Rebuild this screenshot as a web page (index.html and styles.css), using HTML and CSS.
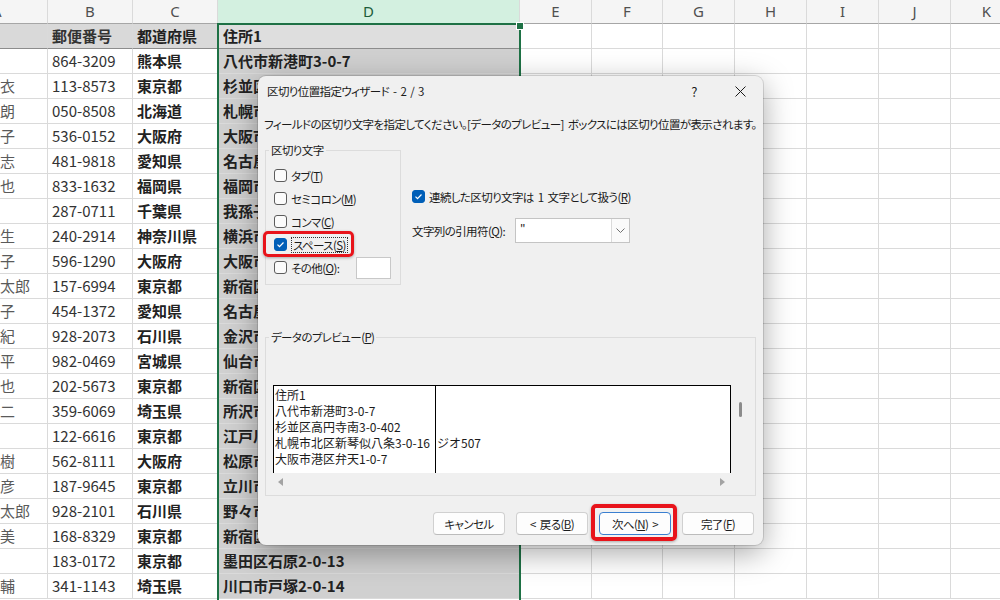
FILE: index.html
```html
<!DOCTYPE html>
<html lang="ja">
<head>
    <meta charset="UTF-8">
    <title>区切り位置指定ウィザード</title>
    <link rel="stylesheet" href="styles.css">
</head>
<body>
    <div class="app">
        <div class="sheet" id="sheet"></div>
        <div class="selection"></div>

        <div class="dialog">
            <div class="titlebar">
                <span class="title">区切り位置指定ウィザード - 2 / 3</span>
                <span class="tb-btn">?</span>
                <span class="tb-btn">
                    <svg width="11" height="11" viewBox="0 0 11 11"><path d="M.5.5l10 10M10.5.5l-10 10" stroke="#1b1b1b" stroke-width="1"/></svg>
                </span>
            </div>

            <p class="desc">フィールドの区切り文字を指定してください。[データのプレビュー] ボックスには区切り位置が表示されます。</p>

            <div class="options">
                <fieldset class="group delims">
                    <legend>区切り文字</legend>
                    <div class="check"><span class="box"></span><span>タブ(<u>T</u>)</span></div>
                    <div class="check"><span class="box"></span><span>セミコロン(<u>M</u>)</span></div>
                    <div class="check"><span class="box"></span><span>コンマ(<u>C</u>)</span></div>
                    <div class="check mark">
                        <span class="box on"><svg width="9" height="9" viewBox="0 0 9 9"><path d="M1.5 4.7l2 2 4-4.2" fill="none" stroke="#fff" stroke-width="1.2"/></svg></span>
                        <span class="focus">スペース(<u>S</u>)</span>
                    </div>
                    <div class="check"><span class="box"></span><span>その他(<u>O</u>):</span><span class="other-input"></span></div>
                </fieldset>

                <div class="right-opts">
                    <div class="check">
                        <span class="box on"><svg width="9" height="9" viewBox="0 0 9 9"><path d="M1.5 4.7l2 2 4-4.2" fill="none" stroke="#fff" stroke-width="1.2"/></svg></span>
                        <span>連続した区切り文字は 1 文字として扱う(<u>R</u>)</span>
                    </div>
                    <div class="quote-row">
                        <span>文字列の引用符(<u>Q</u>):</span>
                        <div class="select">
                            <span class="val">"</span>
                            <span class="chev"><svg width="9" height="5" viewBox="0 0 9 5"><path d="M.5.5l4 4 4-4" fill="none" stroke="#707070"/></svg></span>
                        </div>
                    </div>
                </div>
            </div>

            <fieldset class="group preview-group">
                <legend>データのプレビュー(<u>P</u>)</legend>
                <div class="preview">
                    <div class="pdata">
                        <div class="pcol first">
                            住所1<br>
                            八代市新港町3-0-7<br>
                            杉並区高円寺南3-0-402<br>
                            札幌市北区新琴似八条3-0-16<br>
                            大阪市港区弁天1-0-7
                        </div>
                        <div class="pcol">
                            <br><br><br>ジオ507
                        </div>
                    </div>
                    <div class="vscroll"><span class="thumb"></span></div>
                    <div class="hscroll"><span class="arrow left"></span><span class="arrow right"></span></div>
                    <div></div>
                </div>
            </fieldset>

            <div class="buttons">
                <div class="btn"><span>キャンセル</span></div>
                <div class="btn"><span>&lt; 戻る(<u>B</u>)</span></div>
                <div class="btn default mark"><span>次へ(<u>N</u>) &gt;</span></div>
                <div class="btn"><span>完了(<u>F</u>)</span></div>
            </div>
        </div>
    </div>

    <script>
        const cols = ['A', 'B', 'C', 'D', 'E', 'F', 'G', 'H', 'I', 'J', 'K'];
        const rows = [
            ['', '郵便番号', '都道府県', '住所1'],
            ['', '864-3209', '熊本県', '八代市新港町3-0-7'],
            ['衣', '113-8573', '東京都', '杉並区高円寺南3-0-402'],
            ['朗', '050-8508', '北海道', '札幌市北区新琴似八条3-0-16 ジオ507'],
            ['子', '536-0152', '大阪府', '大阪市港区弁天1-0-7'],
            ['志', '481-9818', '愛知県', '名古屋市中区栄2-0-9'],
            ['也', '833-1632', '福岡県', '福岡市博多区住吉4-0-3'],
            ['', '287-0711', '千葉県', '我孫子市我孫子1-0-12'],
            ['生', '240-2914', '神奈川県', '横浜市西区みなとみらい2-0-1'],
            ['子', '596-1290', '大阪府', '大阪市北区梅田3-0-5'],
            ['太郎', '157-6994', '東京都', '新宿区西新宿2-0-8'],
            ['子', '454-1372', '愛知県', '名古屋市中川区高畑1-0-4'],
            ['紀', '928-2073', '石川県', '金沢市広坂1-0-1'],
            ['平', '982-0469', '宮城県', '仙台市青葉区国分町3-0-7'],
            ['也', '202-5673', '東京都', '新宿区歌舞伎町1-0-3'],
            ['二', '359-6069', '埼玉県', '所沢市並木1-0-1'],
            ['', '122-6616', '東京都', '江戸川区中央1-0-1'],
            ['樹', '562-8111', '大阪府', '松原市阿保1-0-1'],
            ['彦', '187-9645', '東京都', '立川市泉町1-0-6'],
            ['太郎', '928-2101', '石川県', '野々市市三納1-0-1'],
            ['美', '168-8329', '東京都', '新宿区四谷2-0-11'],
            ['', '183-0172', '東京都', '墨田区石原2-0-13'],
            ['輔', '341-1143', '埼玉県', '川口市戸塚2-0-14']
        ];

        let html = cols.map(c => {
            let cls = 'hd';
            if (c === 'A') cls += ' hd-a';
            if (c === 'D') cls += ' hd-sel';
            return `<div class="${cls}">${c}</div>`;
        }).join('');

        rows.forEach((r, i) => {
            const th = i === 0 ? ' th' : '';
            html += `<div class="cell a${th}">${r[0]}</div>`;
            html += `<div class="cell num${th}">${r[1]}</div>`;
            html += `<div class="cell bold${th}">${r[2]}</div>`;
            html += `<div class="cell d${th}">${r[3]}</div>`;
            for (let k = 0; k < 7; k++) html += '<div class="cell"></div>';
        });

        document.getElementById('sheet').innerHTML = html;
    </script>
</body>
</html>
```

FILE: styles.css
```css
body {
    margin: 0;
    font-family: "Noto Sans CJK JP", sans-serif;
    background: #fff;
}
.app {
    position: relative;
    width: 1000px;
    height: 600px;
    overflow: hidden;
}

/* sheet */
.sheet {
    display: grid;
    grid-template-columns: 48px 85px 85px 302px 72px 71px 72px 72px 72px 72px 72px;
    grid-template-rows: 24px;
    grid-auto-rows: 25px;
}
.hd {
    background: #f5f5f5;
    border-right: 1px solid #dadada;
    border-bottom: 1px solid #a6a6a6;
    font-family: "Noto Sans", sans-serif;
    font-size: 15px;
    line-height: 23px;
    color: #505050;
    text-align: center;
    overflow: hidden;
}
.hd-a {
    text-align: left;
    text-indent: -8px;
}
.hd-sel {
    background: #d3f0e0;
    color: #1d5c3a;
}
.cell {
    border-right: 1px solid #dadada;
    border-bottom: 1px solid #dadada;
    padding-left: 4px;
    font-size: 15px;
    line-height: 24px;
    color: #222;
    white-space: nowrap;
    overflow: hidden;
}
.cell.a {
    padding-left: 0;
    color: #5a5a5a;
}
.cell.num {
    color: #333;
}
.cell.bold,
.cell.d {
    font-weight: bold;
}
.cell.d {
    padding-left: 5px;
    background: #d0d0d0;
}
.cell.th {
    background: #d9d9d9;
    font-weight: bold;
    border-bottom-color: #8c8c8c;
}
.cell.d.th {
    background: #dedede;
}
.selection {
    position: absolute;
    left: 217px;
    top: 23px;
    width: 300px;
    height: 600px;
    border: 2px solid #1e7145;
}
.selection::after {
    content: '';
    position: absolute;
    right: -5px;
    top: -3px;
    width: 6px;
    height: 6px;
    background: #1e7145;
    border: 1px solid #fff;
}

/* dialog */
.dialog {
    position: absolute;
    left: 258px;
    top: 76px;
    width: 505px;
    height: 469px;
    background: #f0f0f0;
    border-radius: 8px;
    box-shadow: 0 0 0 1px rgba(0,0,0,0.12), 0 8px 30px rgba(0,0,0,0.35);
    font-size: 11.5px;
    letter-spacing: -0.6px;
    word-spacing: 2px;
    font-feature-settings: "palt";
    color: #1b1b1b;
    display: flex;
    flex-direction: column;
}
.titlebar {
    height: 30px;
    display: flex;
    align-items: center;
    padding-left: 9px;
}
.title {
    flex: 1;
}
.tb-btn {
    width: 46px;
    height: 30px;
    display: flex;
    align-items: center;
    justify-content: center;
    font-size: 13px;
}
.desc {
    margin: 10px 0 0 6px;
    line-height: 16px;
    white-space: nowrap;
}
.options {
    display: flex;
    gap: 11px;
    margin: 10px 0 0 7px;
}
.group {
    margin: 0;
    border: 1px solid #dcdcdc;
    min-width: 0;
}
legend {
    padding: 0 2px;
    line-height: 16px;
}
.delims {
    box-sizing: border-box;
    width: 136px;
    padding: 6px 0 5px 8px;
}
.delims legend {
    margin-left: -5px;
}
.check {
    display: flex;
    align-items: center;
    gap: 4px;
    width: max-content;
    height: 23px;
    white-space: nowrap;
}
.box {
    box-sizing: border-box;
    width: 13px;
    height: 13px;
    flex: none;
    border: 1px solid #5c5c5c;
    border-radius: 3px;
    background: #fbfbfb;
    display: flex;
    align-items: center;
    justify-content: center;
}
.box.on {
    background: #005fb8;
    border-color: #005fb8;
}
.focus {
    border: 1px dotted #333;
    padding: 0 1px;
    line-height: 14px;
}
.other-input {
    width: 35px;
    height: 22px;
    box-sizing: border-box;
    margin-left: 13px;
    background: #fff;
    border: 1px solid #c8c8c8;
}
.right-opts {
    padding-top: 43px;
}
.quote-row {
    display: flex;
    align-items: center;
    gap: 10px;
    margin-top: 10px;
}
.select {
    box-sizing: border-box;
    width: 115px;
    height: 25px;
    display: flex;
    background: #fff;
    border: 1px solid #c4c4c4;
}
.select .val {
    flex: 1;
    padding-left: 4px;
    line-height: 21px;
}
.select .chev {
    width: 17px;
    display: flex;
    align-items: center;
    justify-content: center;
    border-left: 1px solid #dadada;
    background: #fafafa;
}

/* preview */
.preview-group {
    margin: 44px 7px 0 7px;
    padding: 40px 0 5px 7px;
}
.preview-group legend {
    margin-left: -4px;
}
.preview {
    display: grid;
    grid-template-columns: 458px 17px;
    grid-template-rows: 88px 17px;
}
.pdata {
    display: flex;
    background: #fff;
    border: 1px solid #000;
    border-bottom: none;
    font-size: 12px;
    letter-spacing: 0;
    word-spacing: 0;
    font-feature-settings: normal;
    line-height: 16px;
    overflow: hidden;
}
.pcol {
    padding: 1px 0 0 1px;
    white-space: nowrap;
}
.pcol.first {
    width: 160px;
    border-right: 1px solid #000;
}
.vscroll {
    padding: 17px 0 0 8px;
}
.thumb {
    display: block;
    width: 3px;
    height: 15px;
    border-radius: 2px;
    background: #8b8b8b;
}
.hscroll {
    display: flex;
    align-items: center;
    justify-content: space-between;
    padding: 0 6px 0 5px;
}
.arrow {
    width: 0;
    height: 0;
    border-top: 4px solid transparent;
    border-bottom: 4px solid transparent;
}
.arrow.left {
    border-right: 5px solid #a3a3a3;
}
.arrow.right {
    border-left: 5px solid #a3a3a3;
}

/* buttons */
.buttons {
    display: flex;
    justify-content: flex-end;
    gap: 11px;
    margin-top: 16px;
    padding-right: 9px;
}
.btn {
    box-sizing: border-box;
    width: 72px;
    height: 23px;
    display: flex;
    align-items: center;
    justify-content: center;
    background: #fdfdfd;
    border: 1px solid #d0d0d0;
    border-bottom-color: #bcbcbc;
    border-radius: 4px;
}
.btn.default {
    border-color: #3a7fd0;
}

/* red callouts */
.mark {
    position: relative;
}
.mark::after {
    content: '';
    position: absolute;
    border: 4px solid #e8141b;
    border-radius: 5px;
    box-shadow: 0 1px 3px rgba(0,0,0,0.3);
}
.check.mark::after {
    left: -11px;
    right: -6px;
    top: -2px;
    bottom: -1px;
    border-width: 3px;
}
.btn.mark::after {
    left: -9px;
    right: -7px;
    top: -9px;
    bottom: -7px;
}
```
